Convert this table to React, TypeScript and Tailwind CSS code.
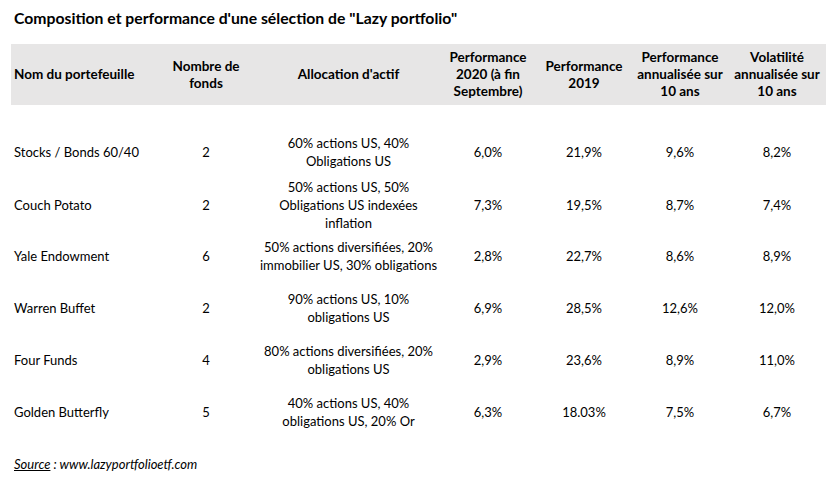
import React from "react";

type Row = {
  name: string;
  n: string;
  alloc: React.ReactNode;
  p20: string;
  p19: string;
  pa: string;
  vol: string;
};

const rows: Row[] = [
  { name: "Stocks / Bonds 60/40", n: "2", alloc: (<>60% actions US, 40%<br />Obligations US</>), p20: "6,0%", p19: "21,9%", pa: "9,6%", vol: "8,2%" },
  { name: "Couch Potato", n: "2", alloc: (<>50% actions US, 50%<br />Obligations US indexées<br />inflation</>), p20: "7,3%", p19: "19,5%", pa: "8,7%", vol: "7,4%" },
  { name: "Yale Endowment", n: "6", alloc: (<>50% actions diversifiées, 20%<br />immobilier US, 30% obligations</>), p20: "2,8%", p19: "22,7%", pa: "8,6%", vol: "8,9%" },
  { name: "Warren Buffet", n: "2", alloc: (<>90% actions US, 10%<br />obligations US</>), p20: "6,9%", p19: "28,5%", pa: "12,6%", vol: "12,0%" },
  { name: "Four Funds", n: "4", alloc: (<>80% actions diversifiées, 20%<br />obligations US</>), p20: "2,9%", p19: "23,6%", pa: "8,9%", vol: "11,0%" },
  { name: "Golden Butterfly", n: "5", alloc: (<>40% actions US, 40%<br />obligations US, 20% Or</>), p20: "6,3%", p19: "18.03%", pa: "7,5%", vol: "6,7%" },
];

const cols = "grid grid-cols-[149px_92px_193px_86px_106px_86px_103px]";

export default function App() {
  return (
    <div
      className="w-[837px] h-[489px] bg-white text-black overflow-hidden"
      style={{ fontFamily: "Lato, 'Open Sans', sans-serif" }}
    >
      <div className="pl-[14px] pt-[8px] h-[44px] text-[15.75px] font-bold leading-[20px]">
        Composition et performance d'une sélection de "Lazy portfolio"
      </div>
      <div className="pl-[11px]">
        <div className={`${cols} w-[815px] h-[61px] bg-[#e7e6e6] items-center text-[13.5px] font-bold leading-[17px] whitespace-nowrap`}>
          <div className="pl-[3px]">Nom du portefeuille</div>
          <div className="text-center">Nombre de<br />fonds</div>
          <div className="text-center">Allocation d'actif</div>
          <div className="text-center">Performance<br />2020 (à fin<br />Septembre)</div>
          <div className="text-center">Performance<br />2019</div>
          <div className="text-center">Performance<br />annualisée sur<br />10 ans</div>
          <div className="text-center pl-[5px]">Volatilité<br />annualisée sur<br />10 ans</div>
        </div>
        <div className="h-[21px]" />
        {rows.map((r) => (
          <div key={r.name} className={`${cols} w-[815px] h-[52px] items-center text-[13px] leading-[18px] whitespace-nowrap`}>
            <div className="pl-[3px]">{r.name}</div>
            <div className="text-center">{r.n}</div>
            <div className="text-center">{r.alloc}</div>
            <div className="text-center">{r.p20}</div>
            <div className="text-center">{r.p19}</div>
            <div className="text-center">{r.pa}</div>
            <div className="text-center pl-[5px]">{r.vol}</div>
          </div>
        ))}
      </div>
      <div className="pl-[14px] pt-[17px] text-[13px] italic leading-[18px]">
        <span className="underline">Source</span> : www.lazyportfolioetf.com
      </div>
    </div>
  );
}
